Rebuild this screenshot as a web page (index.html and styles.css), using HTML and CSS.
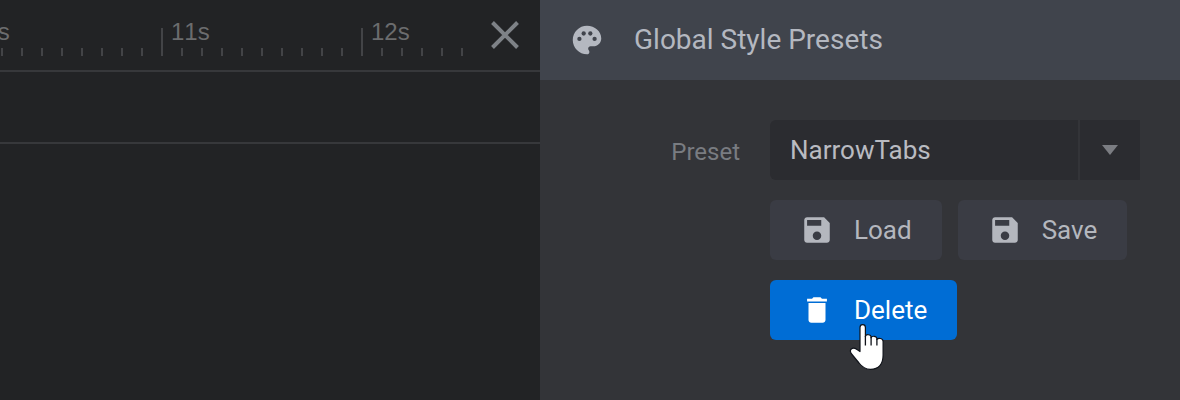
FILE: index.html
```html
<!DOCTYPE html>
<html lang="en">
<head>
<meta charset="utf-8">
<title>Global Style Presets</title>
<link rel="stylesheet" href="styles.css">
</head>
<body>
<div class="app">
  <main class="timeline">
    <div class="timeline-head">
      <div class="ruler">
        <div class="second"><span class="second-label">10s</span></div>
        <div class="second"><span class="second-label">11s</span></div>
        <div class="second second-last"><span class="second-label">12s</span></div>
      </div>
      <button class="close" type="button" aria-label="Close">
        <svg width="30" height="30" viewBox="0 0 30 30" aria-hidden="true"><path d="M2.500 2.500 27.500 27.500M27.500 2.500 2.500 27.500" fill="none" stroke="currentColor" stroke-width="4"/></svg>
      </button>
    </div>
    <div class="track"></div>
  </main>
  <aside class="panel">
    <header class="panel-head">
      <svg width="38" height="38" viewBox="0 0 24 24" aria-hidden="true"><path fill="currentColor" d="M12 3c-4.970 0-9 4.030-9 9s4.030 9 9 9c.83 0 1.500-.67 1.500-1.500 0-.39-.15-.74-.39-1.010-.23-.26-.38-.61-.38-.99 0-.83.67-1.500 1.500-1.500H16c2.760 0 5-2.240 5-5 0-4.420-4.030-8-9-8z"/><g class="palette-wells"><circle cx="7.200" cy="11.300" r="1.350"/><circle cx="9.900" cy="7.900" r="1.350"/><circle cx="14.100" cy="7.900" r="1.350"/><circle cx="16.800" cy="11.300" r="1.350"/></g></svg>
      <h1 class="panel-title">Global Style Presets</h1>
    </header>
    <form class="form">
      <label class="form-label" for="preset">Preset</label>
      <div class="controls">
        <div class="select-wrap">
          <select class="select" id="preset"><option>NarrowTabs</option></select>
          <span class="select-toggle"><svg width="16" height="10" viewBox="0 0 16 10" aria-hidden="true"><path fill="currentColor" d="M0 0h16L8 10z"/></svg></span>
        </div>
        <div class="actions">
          <button class="btn" type="button">
            <svg width="34" height="34" viewBox="0 0 24 24" aria-hidden="true"><path fill="currentColor" d="M17 3H5c-1.110 0-2 .9-2 2v14c0 1.100.89 2 2 2h14c1.100 0 2-.9 2-2V7l-4-4zm-5 16c-1.660 0-3-1.340-3-3s1.340-3 3-3 3 1.340 3 3-1.340 3-3 3zm3-10H5V5h10v4z"/></svg>
            Load
          </button>
          <button class="btn" type="button">
            <svg width="34" height="34" viewBox="0 0 24 24" aria-hidden="true"><path fill="currentColor" d="M17 3H5c-1.110 0-2 .9-2 2v14c0 1.100.89 2 2 2h14c1.100 0 2-.9 2-2V7l-4-4zm-5 16c-1.660 0-3-1.340-3-3s1.340-3 3-3 3 1.340 3 3-1.340 3-3 3zm3-10H5V5h10v4z"/></svg>
            Save
          </button>
          <button class="btn btn-active" type="button">
            <svg width="34" height="34" viewBox="0 0 24 24" aria-hidden="true"><path fill="currentColor" d="M6 19c0 1.100.9 2 2 2h8c1.100 0 2-.9 2-2V7H6v12zM19 4h-3.500l-1-1h-5l-1 1H5v2h14V4z"/></svg>
            Delete
            <svg class="pointer" width="36" height="48" viewBox="0 0 36 48" aria-hidden="true"><path fill="#fff" stroke="#10131a" stroke-width="1.200" stroke-linejoin="round" d="M11 28.500V4.500c0-3.800 5.400-3.800 5.400 0V13.500c.5-2.600 5.500-2.300 5.700.5v.8c.8-2.300 5.600-2 5.800.8v.8c1.300-1.700 6.200-1.400 6.200 2V32c0 9-4.600 14.300-12.600 14.300-5.500 0-8.500-2.300-11.500-6.300L3 31.500C-1 26.500 3.500 23.500 8 26.500z"/><path fill="none" stroke="#10131a" stroke-width="1.300" d="M16.400 13v9.500M22.100 14v8.500M27.900 16v6.500"/></svg>
          </button>
        </div>
      </div>
    </form>
  </aside>
</div>
</body>
</html>
```
FILE: styles.css
```css
* {
  box-sizing: border-box;
}

body {
  margin: 0;
  background: #333438;
  font-family: Roboto, "Liberation Sans", sans-serif;
}

.app {
  display: flex;
  min-height: 100vh;
}

.timeline {
  flex: 1;
  min-width: 0;
  background: #222325;
}

.timeline-head {
  display: flex;
  height: 72px;
  border-bottom: 2px solid #37383b;
}

.ruler {
  display: flex;
  flex: 1;
  justify-content: flex-end;
  min-width: 0;
  height: 56px;
  overflow: hidden;
}

.second {
  flex: none;
  width: 200px;
  padding: 18px 0 0 10px;
  background:
    linear-gradient(#434447, #434447) 0 100% / 2px 28px no-repeat,
    linear-gradient(90deg, #434447 2px, transparent 2px) 0 100% / 20px 8px repeat-x;
}

.second-last {
  width: 109px;
}

.second-label {
  display: block;
  color: #6b6c6e;
  font: 24px/28px "Liberation Sans", Arial, sans-serif;
  font-kerning: none;
}

.close {
  display: flex;
  align-items: center;
  justify-content: center;
  width: 70px;
  padding: 0;
  border: 0;
  background: none;
  color: #7e8287;
}

.track {
  height: 72px;
  border-bottom: 2px solid #37383b;
}

.panel {
  width: 640px;
  background: #333438;
}

.panel-head {
  display: flex;
  align-items: center;
  gap: 28px;
  height: 80px;
  padding: 0 28px;
  background: #40444c;
  color: #b4b8c0;
}

.palette-wells {
  fill: #40444c;
}

.panel-title {
  margin: 0;
  font-size: 28px;
  font-weight: 400;
  line-height: 34px;
}

.form {
  display: flex;
  gap: 30px;
  padding: 40px;
}

.form-label {
  width: 160px;
  color: #797c81;
  font-size: 24px;
  line-height: 64px;
  text-align: right;
}

.controls {
  display: grid;
  flex: 1;
  gap: 20px;
}

.select-wrap {
  position: relative;
}

.select {
  display: block;
  width: 100%;
  height: 60px;
  padding: 0 80px 0 20px;
  border: 0;
  border-radius: 6px 0 0 6px;
  appearance: none;
  background: #2b2c30;
  color: #b9bbc1;
  font: 26px/32px Roboto, sans-serif;
}

.select-toggle {
  position: absolute;
  inset: 0 0 0 auto;
  display: flex;
  align-items: center;
  justify-content: center;
  width: 62px;
  border-left: 2px solid #333438;
  color: #7b7d82;
  pointer-events: none;
}

.actions {
  display: flex;
  flex-wrap: wrap;
  gap: 20px 16px;
}

.btn {
  position: relative;
  display: flex;
  align-items: center;
  gap: 20px;
  height: 60px;
  padding: 0 30px;
  border: 0;
  border-radius: 6px;
  background: #3a3c44;
  color: #b4b7be;
  font: 26px/32px Roboto, sans-serif;
}

.btn-active {
  background: #006dd5;
  color: #fff;
}

.pointer {
  position: absolute;
  top: 43px;
  left: 79px;
}
```
